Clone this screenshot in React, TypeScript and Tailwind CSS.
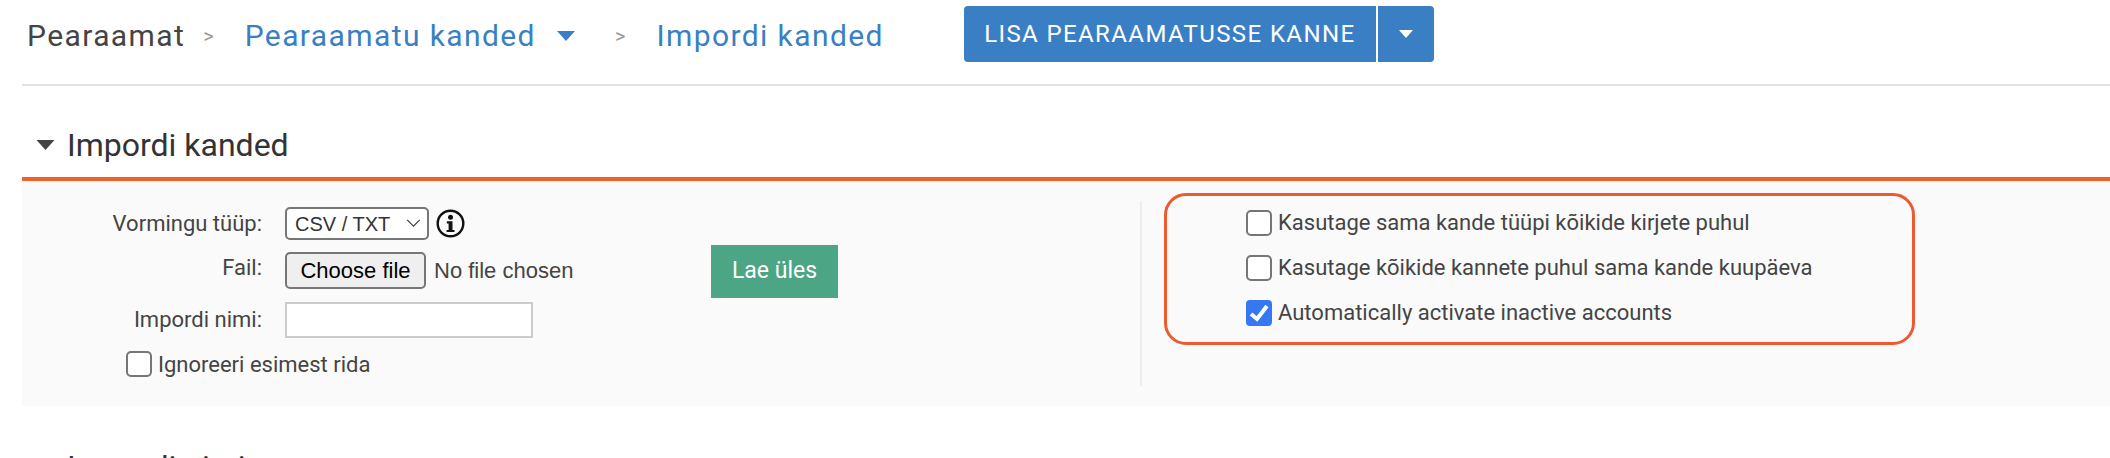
import React from "react";

const roboto = { fontFamily: "Roboto, sans-serif" };
const arial = { fontFamily: "'Liberation Sans', sans-serif" };

const Caret = ({ className }: { className: string }) => (
  <svg viewBox="0 0 18 10" className={className} fill="currentColor">
    <path d="M0 0h18L9 10z" />
  </svg>
);

const Box = ({ checked }: { checked?: boolean }) =>
  checked ? (
    <span className="flex h-[26px] w-[26px] shrink-0 items-center justify-center rounded-[4px] bg-[#3478f6]">
      <svg viewBox="0 0 26 26" className="h-[26px] w-[26px]" fill="none" stroke="#fff" strokeWidth="4">
        <path d="M5 14l6 5 10-13" />
      </svg>
    </span>
  ) : (
    <span className="h-[26px] w-[26px] shrink-0 rounded-[5px] border-2 border-[#767676] bg-white" />
  );

const Option = ({ label, checked }: { label: string; checked?: boolean }) => (
  <label className="flex h-[26px] items-center gap-[6px] text-[22px] text-[#444]">
    <Box checked={checked} />
    {label}
  </label>
);

const App = () => {
  return (
    <div className="relative h-[458px] w-[2110px] overflow-hidden bg-white" style={roboto}>
      {/* Breadcrumb */}
      <div className="ml-[22px] flex h-[86px] items-start border-b-2 border-[#e2e2e2]">
        <div className="flex h-[68px] items-center text-[30px] tracking-[1.4px]">
          <span className="ml-[5px] pt-[3px] text-[#444]">Pearaamat</span>
          <span className="ml-[18px] pt-[3px] text-[20px] tracking-normal text-[#999]">&gt;</span>
          <a className="ml-[31px] pt-[3px] text-[#3a7fc4]">Pearaamatu kanded</a>
          <Caret className="ml-[20px] mt-[3px] h-[10px] w-[20px] text-[#3a7fc4]" />
          <span className="ml-[39px] pt-[3px] text-[20px] tracking-normal text-[#999]">&gt;</span>
          <a className="ml-[31px] pt-[3px] text-[#3a7fc4]">Impordi kanded</a>
          <div className="ml-[80px] flex h-[56px] items-stretch text-white">
            <button className="flex w-[412px] items-center justify-center rounded-l-[4px] bg-[#3a7fc4] text-[24px] tracking-[1.4px]">
              LISA PEARAAMATUSSE KANNE
            </button>
            <button className="flex w-[58px] items-center justify-center rounded-r-[4px] border-l-2 border-white bg-[#3a7fc4]">
              <Caret className="h-[8px] w-[14px]" />
            </button>
          </div>
        </div>
      </div>

      {/* Section title */}
      <div className="ml-[22px] flex h-[95px] items-center border-b-4 border-[#f0602b] pt-[26px]">
        <Caret className="ml-[14px] h-[10px] w-[19px] text-[#444]" />
        <h2 className="ml-[12px] text-[32px] text-[#333]">Impordi kanded</h2>
      </div>

      {/* Import panel */}
      <div className="ml-[22px] flex h-[225px] bg-[#fafafa] pt-[20px]">
        <div className="flex h-[185px] w-[1120px] border-r-2 border-[#eeeeee]">
          <div className="w-[689px] pt-[6px] text-[22px] text-[#444]">
            <div className="flex h-[33px] items-center">
              <span className="w-[240px] text-right">Vormingu tüüp:</span>
              <div className="ml-[23px] flex h-[33px] w-[144px] items-center justify-between rounded-[5px] border-2 border-[#767676] bg-white pl-[8px] pr-[6px] text-[20px] text-[#333]" style={arial}>
                CSV / TXT
                <svg viewBox="0 0 16 10" className="h-[9px] w-[15px]" fill="none" stroke="#444" strokeWidth="1.4">
                  <path d="M1 1l7 7 7-7" />
                </svg>
              </div>
              <svg viewBox="0 0 29 29" className="ml-[7px] h-[29px] w-[29px]" fill="#111">
                <circle cx="14.500" cy="14.500" r="12.800" fill="none" stroke="#111" strokeWidth="2.400" />
                <circle cx="14.500" cy="8.300" r="2.500" />
                <path d="M10.800 12.300h5.700v8.600h2v2.200h-7.900v-2.200h2v-6.400h-1.800z" />
              </svg>
            </div>
            <div className="mt-[12px] flex h-[37px] items-center">
              <span className="w-[240px] pb-[6px] text-right">Fail:</span>
              <div className="ml-[23px] flex items-center gap-[8px]" style={arial}>
                <button className="h-[37px] w-[141px] rounded-[5px] border-2 border-[#767676] bg-[#efefef] text-black">Choose file</button>
                <span>No file chosen</span>
              </div>
            </div>
            <div className="mt-[13px] flex h-[36px] items-center">
              <span className="w-[240px] pb-[2px] text-right">Impordi nimi:</span>
              <div className="ml-[23px] h-[36px] w-[248px] border-2 border-[#cccccc] bg-white" />
            </div>
            <div className="ml-[104px] mt-[13px]">
              <Option label="Ignoreeri esimest rida" />
            </div>
          </div>
          <button className="mt-[44px] h-[53px] w-[127px] bg-[#4ca685] text-[23px] text-white">Lae üles</button>
        </div>

        <div className="ml-[104px] mt-[9px] flex flex-col gap-[19px] [&_label]:leading-[24px]">
          <Option label="Kasutage sama kande tüüpi kõikide kirjete puhul" />
          <Option label="Kasutage kõikide kannete puhul sama kande kuupäeva" />
          <Option label="Automatically activate inactive accounts" checked />
        </div>
      </div>

      {/* Next section, cut off by the window */}
      <div className="ml-[67px] mt-[37px] text-[32px] text-[#333]">Impordi nimi</div>

      {/* Annotation drawn over the screenshot */}
      <div className="absolute left-[1164px] top-[193px] h-[152px] w-[751px] rounded-[22px] border-[3px] border-[#ee5a2f]" />
    </div>
  );
};

export default App;
